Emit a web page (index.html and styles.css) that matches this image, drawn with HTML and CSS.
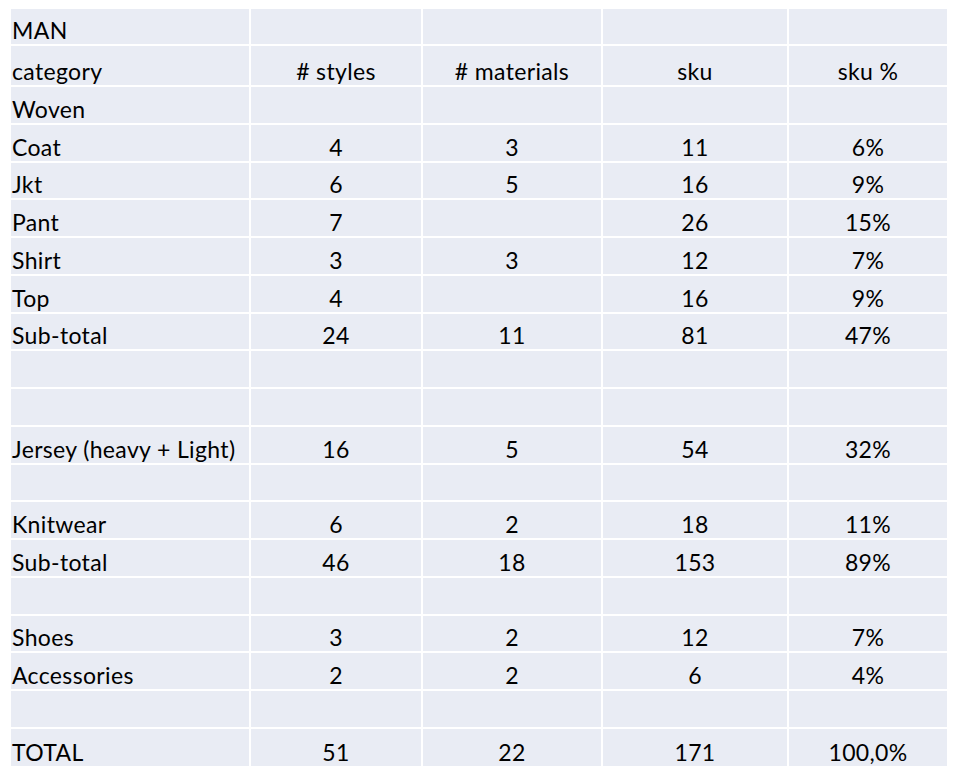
FILE: index.html
```html
<!DOCTYPE html>
<html>
<head>
<meta charset="utf-8">
<link rel="stylesheet" href="styles.css">
</head>
<body>
<div class="sheet">
  <div class="c">MAN</div><div class="c n"></div><div class="c n"></div><div class="c n"></div><div class="c n"></div>
  <div class="c">category</div><div class="c n"># styles</div><div class="c n"># materials</div><div class="c n">sku</div><div class="c n">sku %</div>
  <div class="c">Woven</div><div class="c n"></div><div class="c n"></div><div class="c n"></div><div class="c n"></div>
  <div class="c">Coat</div><div class="c n">4</div><div class="c n">3</div><div class="c n">11</div><div class="c n">6%</div>
  <div class="c">Jkt</div><div class="c n">6</div><div class="c n">5</div><div class="c n">16</div><div class="c n">9%</div>
  <div class="c">Pant</div><div class="c n">7</div><div class="c n"></div><div class="c n">26</div><div class="c n">15%</div>
  <div class="c">Shirt</div><div class="c n">3</div><div class="c n">3</div><div class="c n">12</div><div class="c n">7%</div>
  <div class="c">Top</div><div class="c n">4</div><div class="c n"></div><div class="c n">16</div><div class="c n">9%</div>
  <div class="c">Sub-total</div><div class="c n">24</div><div class="c n">11</div><div class="c n">81</div><div class="c n">47%</div>
  <div class="c"></div><div class="c n"></div><div class="c n"></div><div class="c n"></div><div class="c n"></div>
  <div class="c"></div><div class="c n"></div><div class="c n"></div><div class="c n"></div><div class="c n"></div>
  <div class="c">Jersey (heavy + Light)</div><div class="c n">16</div><div class="c n">5</div><div class="c n">54</div><div class="c n">32%</div>
  <div class="c"></div><div class="c n"></div><div class="c n"></div><div class="c n"></div><div class="c n"></div>
  <div class="c">Knitwear</div><div class="c n">6</div><div class="c n">2</div><div class="c n">18</div><div class="c n">11%</div>
  <div class="c">Sub-total</div><div class="c n">46</div><div class="c n">18</div><div class="c n">153</div><div class="c n">89%</div>
  <div class="c"></div><div class="c n"></div><div class="c n"></div><div class="c n"></div><div class="c n"></div>
  <div class="c">Shoes</div><div class="c n">3</div><div class="c n">2</div><div class="c n">12</div><div class="c n">7%</div>
  <div class="c">Accessories</div><div class="c n">2</div><div class="c n">2</div><div class="c n">6</div><div class="c n">4%</div>
  <div class="c"></div><div class="c n"></div><div class="c n"></div><div class="c n"></div><div class="c n"></div>
  <div class="c">TOTAL</div><div class="c n">51</div><div class="c n">22</div><div class="c n">171</div><div class="c n">100,0%</div>
</div>
</body>
</html>
```
FILE: styles.css
```css
html, body {
  margin: 0;
  padding: 0;
  background: #ffffff;
}
body {
  font-family: Lato, "Open Sans", sans-serif;
  font-size: 23px;
  letter-spacing: 0.35px;
  color: #000000;
}
.sheet {
  margin: 9px 0 0 11px;
  display: grid;
  grid-template-columns: 238px 170px 178px 184px 158px;
  grid-template-rows: 35px 39px repeat(17, 35.76px) 37px;
  gap: 2px;
  width: max-content;
}
.c {
  background: #e9ecf4;
  display: flex;
  align-items: flex-end;
  padding: 0 0 3px 1px;
  line-height: 22px;
  white-space: nowrap;
}
.n {
  justify-content: center;
  padding-left: 0;
}
```
